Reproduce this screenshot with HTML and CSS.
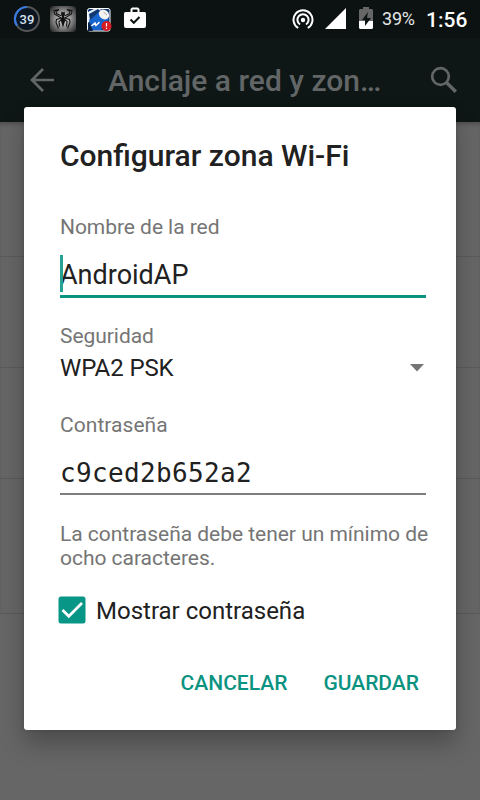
FILE: index.html
```
<!DOCTYPE html>
<html lang="es">
<head>
<meta charset="utf-8">
<title>Configurar zona Wi-Fi</title>
<link rel="stylesheet" href="styles.css">
</head>
<body>
<div class="screen">
  <header class="status">
    <div class="notifications">
      <svg class="ring" width="28" height="28" viewBox="0 0 28 28"><circle cx="14" cy="14" r="12" fill="#0b1522" stroke="#555" stroke-width="2"/><path d="M4 20.600A12 12 0 0 1 14 2" fill="none" stroke="#3978df" stroke-width="2.200"/><text x="14" y="18.600" text-anchor="middle" class="ring-text">39</text></svg>
      <svg class="spider" width="26" height="26" viewBox="0 0 26 26"><defs><radialGradient id="glow" r=".65"><stop offset="0" stop-color="#e4e4e4"/><stop offset=".5" stop-color="#8c8c8c"/><stop offset="1" stop-color="#2a2a2a"/></radialGradient></defs><rect width="26" height="26" rx="3" fill="url(#glow)"/><path d="M11.500 5.500l1.500 1 1.500-1 .5 3-1 2 1.500 3-2.500 8-2.500-8 1.500-3-1-2z" fill="#111"/><path d="M11.500 10L6.500 7.500 6 5.500 9 3.500 4 4.500 4.500 8 11 12M11.500 12l-5 1.500-.5 3 2.500 6M11.500 13.500l-2.500 2 .5 5M14.500 10l5-2.500.5-2-3-2 5 1-.5 3.500-6.500 4M14.500 12l5 1.500.5 3-2.500 6M14.500 13.500l2.500 2-.5 5" fill="none" stroke="#151515" stroke-width="1.100"/></svg>
      <svg class="cleaner" width="26" height="24" viewBox="0 0 26 24"><rect x=".5" y=".5" width="22.500" height="22.500" rx="2" fill="#123970" stroke="#fff"/><path d="M1 4l6-3h7L1 15z" fill="#e8f1fb"/><path d="M2 12L13 2l9 9-8 11H6z" fill="#1664ce"/><path d="M2 6L11 1l2 2L3 12z" fill="#123970"/><ellipse cx="17" cy="6.500" rx="5.500" ry="4.500" transform="rotate(40 17 6.500)" fill="#f2f2f2"/><path d="M16.500 4l3.500 3" stroke="#aaa"/><path d="M1 14l5 9H1z" fill="#0a2548"/><path d="M4.500 18l3.500-3 1 2.500 3.500-3.500" fill="none" stroke="#fff" stroke-width="1.500"/><circle cx="19.500" cy="18" r="5" fill="#d81c24"/><path d="M19.500 15v3.500M19.500 19.800v1.200" stroke="#fff" stroke-width="1.200"/></svg>
      <svg class="bag" width="24" height="22" viewBox="0 0 24 22"><path d="M2.500 5h19A1.500 1.500 0 0 1 23 6.500V19a2 2 0 0 1-2 2H3a2 2 0 0 1-2-2V6.500A1.500 1.500 0 0 1 2.500 5z" fill="#fff"/><path d="M8.500 6V2.500L9.500 1.500h5L15.500 2.500V6" fill="none" stroke="#fff" stroke-width="2"/><path d="M7.500 12.500l3.300 3.300L16.500 10" fill="none" stroke="#0d1414" stroke-width="2"/></svg>
    </div>
    <div class="system">
      <svg class="hotspot" width="22" height="21" viewBox="0 0 22 21"><g fill="none" stroke="#fff" stroke-width="2"><path d="M6.200 19A9.500 9.500 0 1 1 15.800 19"/><path d="M8 15.500A5.600 5.600 0 1 1 14 15.500"/></g><circle cx="11" cy="11" r="2.200" fill="#fff"/></svg>
      <svg class="signal" width="21" height="21" viewBox="0 0 21 21"><path d="M0 21L21 0v21z" fill="#fff"/></svg>
      <svg class="battery" width="14" height="22" viewBox="0 0 14 22"><path d="M4 0h6v2h3l1 1v11H0V3l1-1h3z" fill="#666"/><path d="M0 14h14v7l-1 1H1l-1-1z" fill="#fff"/><path d="M9 5l-6 8h3v6l6-8H8z" fill="#0d1414"/></svg>
      <span class="percent">39%</span>
      <time class="clock">1:56</time>
    </div>
  </header>
  <nav class="appbar">
    <svg class="back" width="26" height="24" viewBox="0 0 26 24"><path d="M24 12H3M13 1L2 12l11 11" fill="none" stroke="#626666" stroke-width="2.700"/></svg>
    <h1 class="page-title">Anclaje a red y zon…</h1>
    <svg class="search" width="28" height="28" viewBox="0 0 28 28"><circle cx="10.500" cy="10.500" r="8.300" fill="none" stroke="#626666" stroke-width="2.700"/><path d="M16.500 16.500l9.300 9.300" stroke="#626666" stroke-width="3.400"/></svg>
  </nav>
  <main class="rows">
    <div class="row tall"></div>
    <div class="row"></div>
    <div class="row"></div>
    <div class="row last"></div>
  </main>
  <section class="dialog">
    <h2 class="dialog-title">Configurar zona Wi-Fi</h2>
    <div class="label name-label">Nombre de la red</div>
    <div class="field name-field"><span class="cursor"></span>AndroidAP</div>
    <div class="label security-label">Seguridad</div>
    <div class="select"><span>WPA2 PSK</span><svg width="14" height="8" viewBox="0 0 14 8"><path d="M0 0h14L7 7.500z" fill="#757575"/></svg></div>
    <div class="label password-label">Contraseña</div>
    <div class="field password-field">c9ced2b652a2</div>
    <p class="help">La contraseña debe tener un mínimo de ocho caracteres.</p>
    <div class="check">
      <svg width="28" height="28" viewBox="0 0 28 28"><rect x=".5" y=".5" width="27" height="27" rx="2.500" fill="#089786"/><path d="M4.500 14l6.300 6.300L24 7" fill="none" stroke="#fff" stroke-width="2.700"/></svg>
      <span class="check-text">Mostrar contraseña</span>
    </div>
    <div class="actions"><span class="cancel">CANCELAR</span><span class="save">GUARDAR</span></div>
  </section>
</div>
</body>
</html>
```
FILE: styles.css
```
* { box-sizing: border-box; }
body { margin: 0; font-family: Roboto, sans-serif; }
svg { display: block; flex: none; }
h1, h2, p { margin: 0; }
.screen { position: relative; width: 480px; height: 800px; overflow: hidden; background: #666; }
.status { display: flex; justify-content: space-between; height: 38px; background: #0c1111; color: #fff; }
.notifications, .system { display: flex; align-items: flex-start; }
.ring { margin: 5px 0 0 13px; }
.ring-text { font: 500 13px Roboto, sans-serif; fill: #d5e2f2; }
.spider { margin: 6px 0 0 9px; }
.cleaner { margin: 8px 0 0 11px; }
.bag { margin: 7px 0 0 10px; }
.hotspot { margin-top: 9px; }
.signal { margin: 8px 0 0 11px; }
.battery { margin: 7px 0 0 13px; }
.percent { margin: 8px 0 0 9px; width: 33px; font-size: 18px; line-height: 22px; letter-spacing: -.2px; color: #e5e8e8; white-space: nowrap; }
.clock { margin: 8px 12px 0 11px; width: 42px; font-size: 21px; font-weight: 500; line-height: 25px; white-space: nowrap; }
.appbar { display: flex; align-items: center; height: 84px; padding: 0 22px 0 30px; background: #0f1616; }
.page-title { margin-left: 52px; padding-top: 1px; width: 274px; font-size: 30px; line-height: 36px; font-weight: 500; color: #626666; white-space: nowrap; }
.search { margin-left: 48px; }
.rows { box-shadow: inset 0 4px 4px -2px #4d4d4d; }
.row { height: 111px; border-bottom: 1px solid #5a5a5a; }
.row.tall { height: 135px; }
.row.last { height: 135px; }
.dialog { position: absolute; left: 24px; top: 107px; width: 432px; height: 623px; padding: 31px 24px 0 36px; border-radius: 3px; background: #fff; color: #212121; box-shadow: 0 14px 24px rgba(0,0,0,.26), 0 0 4px rgba(0,0,0,.15); }
.dialog-title { font-size: 30px; line-height: 35px; font-weight: 500; }
.label { font-size: 21px; line-height: 25px; letter-spacing: -.05px; color: #757575; }
.name-label { margin-top: 42px; }
.field { position: relative; width: 366px; font-size: 27px; line-height: 32px; }
.name-field { height: 43px; margin-top: 15px; padding-top: 4px; border-bottom: 3px solid #0b9381; }
.cursor { position: absolute; left: 0; top: 0; width: 3px; height: 37px; background: #26a293; }
.security-label { margin-top: 26px; }
.select { display: flex; justify-content: space-between; align-items: center; width: 364px; height: 28px; margin-top: 5px; font-size: 24px; line-height: 28px; letter-spacing: -.1px; }
.password-label { margin-top: 31px; letter-spacing: .05px; }
.password-field { height: 38px; margin-top: 19px; border-bottom: 2px solid #7d7f7e; font-family: "DejaVu Sans Mono", monospace; font-size: 26px; letter-spacing: .35px; }
.help { margin-top: 27px; width: 376px; font-size: 21px; line-height: 24px; letter-spacing: -.03px; color: #757575; }
.check { display: flex; align-items: center; height: 28px; margin: 26px 0 0 -2px; gap: 10px; font-size: 24px; }
.check-text { padding-top: 2px; }
.actions { display: flex; justify-content: flex-end; gap: 36px; margin: 47px 13px 0 0; font-size: 21px; line-height: 25px; font-weight: 500; color: #0b9381; }
```
